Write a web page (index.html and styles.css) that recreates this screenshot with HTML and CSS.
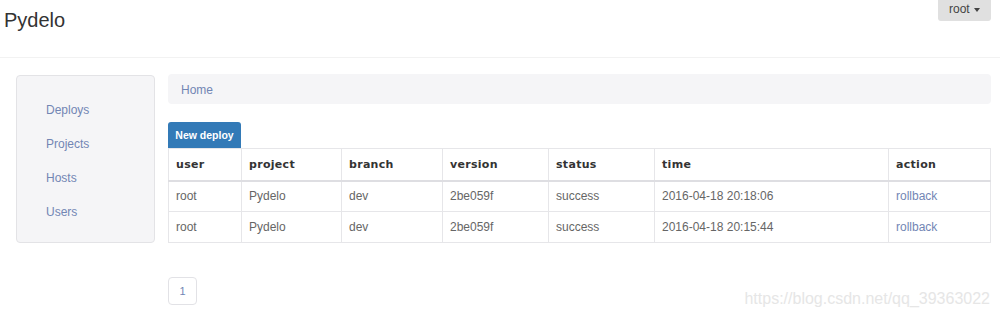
FILE: index.html
```html
<!DOCTYPE html>
<html>

<head>
  <meta charset="utf-8">
  <link rel="stylesheet" href="styles.css">
</head>

<body>
  <div class="navbar">
    <div class="brand">Pydelo</div>
    <div class="user-menu">root <span class="caret"></span></div>
  </div>

  <div class="main">
    <div class="sidebar">
      <a class="side-link">Deploys</a>
      <a class="side-link">Projects</a>
      <a class="side-link">Hosts</a>
      <a class="side-link">Users</a>
    </div>

    <div class="content">
      <div class="breadcrumb"><a>Home</a></div>

      <button class="btn-primary">New deploy</button>

      <table class="deploys">
        <thead>
          <tr>
            <th class="col-user">user</th>
            <th class="col-project">project</th>
            <th class="col-branch">branch</th>
            <th class="col-version">version</th>
            <th class="col-status">status</th>
            <th class="col-time">time</th>
            <th>action</th>
          </tr>
        </thead>
        <tbody>
          <tr>
            <td>root</td>
            <td>Pydelo</td>
            <td>dev</td>
            <td>2be059f</td>
            <td>success</td>
            <td>2016-04-18 20:18:06</td>
            <td><a>rollback</a></td>
          </tr>
          <tr>
            <td>root</td>
            <td>Pydelo</td>
            <td>dev</td>
            <td>2be059f</td>
            <td>success</td>
            <td>2016-04-18 20:15:44</td>
            <td><a>rollback</a></td>
          </tr>
        </tbody>
      </table>

      <div class="pagination">
        <a class="page">1</a>
      </div>
    </div>
  </div>

  <div class="watermark">https://blog.csdn.net/qq_39363022</div>
</body>

</html>
```

FILE: styles.css
```css
* {
  box-sizing: border-box;
  margin: 0;
  padding: 0;
}

:root {
  --text: #666;
  --heading: #333;
  --link: #7286b4;
  --well: #f5f5f7;
  --border: #e3e3e6;
  --primary: #337ab7;
}

body {
  width: 1000px;
  height: 316px;
  overflow: hidden;
  font-family: "Liberation Sans", Arial, sans-serif;
  font-size: 12px;
  color: var(--text);
  background: #fff;
  position: relative;
}

.navbar {
  height: 58px;
  border-bottom: 1px solid #f2f2f2;
  display: flex;
  justify-content: space-between;
  align-items: flex-start;
  padding: 0 9px 0 4px;
}

.brand {
  font-size: 20px;
  color: var(--heading);
  padding-top: 9px;
}

.user-menu {
  background: #e0e0e0;
  color: #444;
  font-size: 12px;
  height: 21px;
  width: 53px;
  padding-top: 2px;
  text-align: center;
  border-radius: 0 0 3px 3px;
}

.caret {
  display: inline-block;
  width: 0;
  height: 0;
  border-top: 4px solid #444;
  border-left: 3px solid transparent;
  border-right: 3px solid transparent;
  vertical-align: middle;
  margin-left: 1px;
}

.main {
  display: flex;
  align-items: flex-start;
  padding: 16px 9px 0 16px;
  gap: 13px;
}

.sidebar {
  width: 139px;
  height: 168px;
  margin-top: 1px;
  background: var(--well);
  border: 1px solid var(--border);
  border-radius: 4px;
  padding: 27px 0 0 29px;
  display: flex;
  flex-direction: column;
  gap: 19px;
}

.side-link {
  color: var(--link);
  line-height: 15px;
}

.content {
  flex: 1;
}

.breadcrumb {
  background: var(--well);
  height: 30px;
  border-radius: 4px;
  padding: 9px 13px;
  line-height: 14px;
  color: var(--link);
}

.btn-primary {
  display: block;
  margin-top: 18px;
  height: 26px;
  width: 73px;
  border: none;
  border-radius: 3px 3px 0 0;
  background: var(--primary);
  color: #fff;
  font-family: "Liberation Sans", Arial, sans-serif;
  font-size: 10.5px;
  font-weight: 700;
}

.deploys {
  width: 100%;
  border-collapse: collapse;
  border: 1px solid #e6e6e9;
}

.deploys th,
.deploys td {
  border: 1px solid #e6e6e9;
  text-align: left;
  padding: 0 7px;
  height: 31px;
}

.deploys th {
  font-family: "DejaVu Sans", Verdana, sans-serif;
  font-size: 11px;
  font-weight: 700;
  letter-spacing: 0.3px;
  color: #333;
  border-bottom: 2px solid #dedee2;
  height: 32px;
}

.deploys td a {
  color: var(--link);
}

.col-user { width: 73px; }
.col-project { width: 100px; }
.col-branch { width: 101px; }
.col-version { width: 106px; }
.col-status { width: 106px; }
.col-time { width: 234px; }

.pagination {
  margin-top: 34px;
  display: flex;
}

.page {
  width: 29px;
  height: 28px;
  border: 1px solid #e2e2e6;
  border-radius: 4px;
  color: var(--link);
  font-size: 11px;
  display: flex;
  align-items: center;
  justify-content: center;
}

.watermark {
  position: absolute;
  right: 10px;
  bottom: 8px;
  font-size: 16px;
  color: #e6e6e6;
}
```
